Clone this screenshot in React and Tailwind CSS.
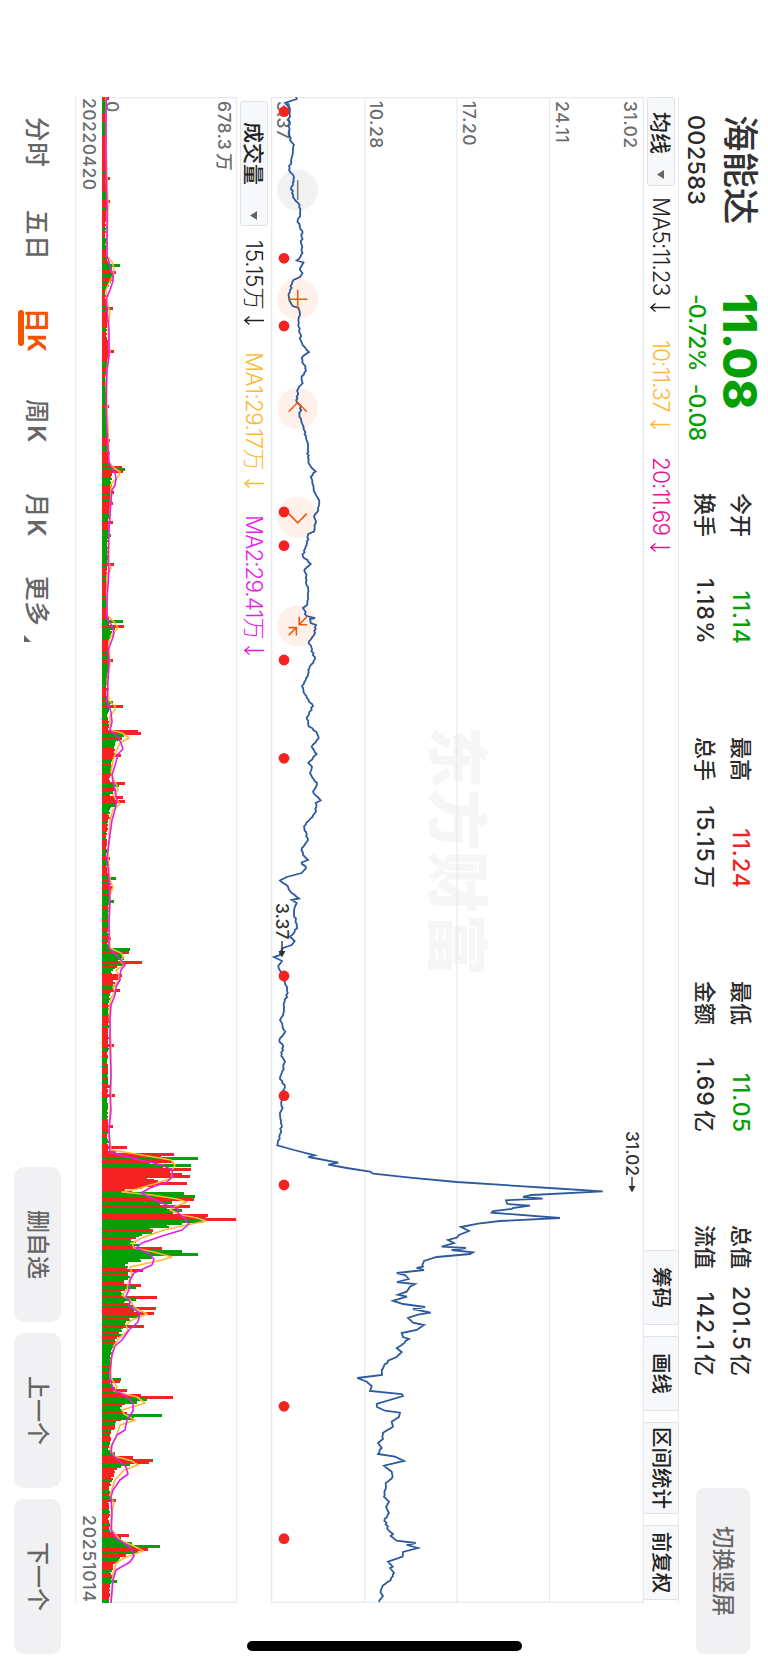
const RED = "#f52222";
const GREEN = "#06a006";

const MAIN_STATS = [
  [
    { label: "今开", value: "11.14", tone: "text-[#06a006]" },
    { label: "换手", value: "1.18%", tone: "text-[#2b2b2b]" },
  ],
  [
    { label: "最高", value: "11.24", tone: "text-[#f52222]" },
    { label: "总手", value: "15.15", unit: "万", tone: "text-[#2b2b2b]" },
  ],
  [
    { label: "最低", value: "11.05", tone: "text-[#06a006]" },
    { label: "金额", value: "1.69", unit: "亿", tone: "text-[#2b2b2b]" },
  ],
  [
    { label: "总值", value: "201.5", unit: "亿", tone: "text-[#2b2b2b]" },
    { label: "流值", value: "142.1", unit: "亿", tone: "text-[#2b2b2b]" },
  ],
];

// closing price, [x, height] pairs where height is measured up from y = 768
const PRICE = [
  [97, 296], [99, 296.7], [103, 285], [107, 289], [130, 289.5], [140, 290], [145, 294], [155, 292.5], [160, 291], [170, 289],
  [177, 294], [187, 291.5], [197, 293], [205, 299.5], [213, 300], [222, 297.5], [233, 302.5], [243, 301], [253, 302.5],
  [260.5, 296.7], [262.5, 303.5], [270, 300], [273, 302.5], [277, 300], [280, 293.5], [290, 290], [300, 289.3], [306, 292.7],
  [308, 298.5], [315, 300], [321.5, 298.5], [340, 300.7], [345, 302.7], [352, 309], [358, 301.7], [370.5, 306], [376.5, 301.7],
  [383, 302.7], [387, 299], [396.5, 296.7], [402, 296.7], [406.5, 301], [416.5, 299.3], [426.5, 303.5], [438, 306], [450, 307.7],
  [463, 308.5], [468, 311.7], [471.5, 315.7], [477, 310.7], [486.5, 313.5], [493, 315], [502.5, 319.3], [510, 318.3], [516.5, 314],
  [521.5, 316], [531.5, 314], [534, 308.3], [543, 307], [556, 302.7], [564, 310.7], [569, 305], [580, 306.7], [595, 308],
  [605, 307], [608, 303], [616, 306.7], [618, 315], [619, 310], [623, 310.7], [625, 316], [635, 314], [641.5, 309], [659, 315],
  [670, 308.3], [680, 305.7], [686, 302], [698, 307], [706, 313], [717.5, 306.7], [726.5, 309], [732, 316.7], [738, 318.7],
  [746.5, 311.7], [754, 316.7], [763, 308.3], [766.5, 312], [773, 310], [783, 317], [791.5, 313], [800.5, 320.7], [803, 315.7],
  [813, 315], [826.5, 304], [840, 308], [848, 302], [855, 303], [860, 308], [862.5, 301.7], [868, 306], [873, 301.7],
  [877, 286.7], [880.5, 280], [886.5, 288], [893, 291.7], [898.5, 299], [900, 291.7], [903, 296.7], [913, 294], [928, 297.3],
  [936.5, 290], [941, 294.7], [945, 291.7], [948, 283], [955, 280], [957, 274], [961, 282], [966, 278.3], [975, 283.3],
  [993, 287.7], [1003, 284], [1013, 283.3], [1020, 280], [1031.5, 285.3], [1040, 279.3], [1046.5, 283.3], [1056, 281.3],
  [1061.5, 285], [1073, 281.7], [1079, 280], [1087, 285], [1096.5, 281], [1108, 282.7], [1115, 280], [1125, 281.7],
  [1136.5, 279.3], [1145.3, 277.3], [1150, 294], [1155.3, 314.7], [1157, 308.3], [1162.7, 338.3], [1164.7, 328.3], [1168, 346.7],
  [1171.7, 370], [1173.7, 373.3], [1177.7, 410], [1182, 456.7], [1188, 549.3], [1191.3, 602.7], [1195, 531.7], [1197, 523],
  [1198.7, 542.7], [1200.3, 506], [1204, 507.3], [1205.7, 530], [1208, 512.7], [1209, 512], [1211, 493], [1212.7, 491.7],
  [1218, 560], [1221, 500], [1223.7, 478], [1227, 461], [1231, 469], [1235, 459], [1237.7, 456.7], [1240, 448], [1243, 454],
  [1246.7, 441.7], [1248, 466], [1250, 451.7], [1252.3, 473], [1254, 470], [1257, 436.7], [1261, 424], [1266.7, 423],
  [1268, 416.7], [1270, 424], [1273, 396.7], [1275, 405], [1279, 408.7], [1282, 397], [1284, 415], [1286.7, 410],
  [1291.7, 406.7], [1294.7, 398], [1296.7, 407], [1300.7, 393], [1304, 403], [1307, 425], [1309, 413], [1312.7, 430.7],
  [1314.7, 418], [1318, 408], [1322.7, 413], [1325, 424], [1330, 416.7], [1333, 401.7], [1337, 403], [1339, 409], [1345, 401.7],
  [1348, 396.7], [1352, 401.7], [1357, 396.7], [1360.7, 388], [1370, 381.7], [1375, 382], [1378, 357.3], [1381.7, 366.7],
  [1386, 371.7], [1391, 370], [1394, 401.7], [1396, 403], [1404, 376.7], [1407, 377], [1410.7, 385], [1412.7, 400], [1417, 399],
  [1421.7, 391.7], [1426.7, 393], [1432.7, 383], [1439, 383], [1443, 378], [1448, 381.7], [1454, 378], [1456.7, 395],
  [1461, 404], [1465.7, 384], [1471.7, 391.7], [1476.7, 392.7], [1483, 385.7], [1496.7, 384], [1501.7, 389], [1507, 386],
  [1513, 389], [1519, 384.7], [1530, 388], [1534, 393], [1536, 390.7], [1540.7, 396.7], [1543, 415.7], [1545, 406.7],
  [1548, 418], [1552, 403], [1556.7, 402.7], [1561.7, 388], [1566.7, 392.7], [1568, 390], [1572.7, 394], [1580, 390.7],
  [1585.7, 382.7], [1592.7, 380.7], [1596, 383], [1602, 379],
];

// bars that stand out: [x, height, colour]
const SPIKES = [
  [98, 7, 1], [178, 8, 1], [201, 8, 1], [265, 18, 0], [268, 10, 0], [272, 14, 1], [275, 12, 0], [308, 11, 1], [343, 7, 1], [351, 12, 1],
  [406, 7, 1], [440, 8, 1], [453, 8, 1], [467, 20, 1], [469, 23, 0], [471, 21, 1], [492, 12, 1], [503, 11, 1], [522, 11, 1],
  [535, 9, 0], [564, 12, 1], [621, 21, 0], [626, 22, 1], [628, 13, 0], [654, 8, 1], [660, 11, 1], [689, 7, 1], [702, 11, 0],
  [706.5, 21, 1], [731, 36, 1], [733, 39, 1], [735, 22, 0], [738, 20, 1], [755, 19, 1], [783, 23, 1], [785, 17, 0], [797, 21, 1],
  [801, 23, 1], [858, 8, 1], [878, 14, 0], [887, 11, 1], [901, 12, 0], [938, 9, 1], [949, 28, 0], [952, 27, 1], [955, 20, 0],
  [958, 22, 0], [962, 40, 1], [964, 23, 0], [975, 20, 1], [978, 18, 1], [990, 18, 1], [1045, 12, 1], [1086, 9, 1], [1095, 13, 1],
  [1126, 11, 1], [1147, 25, 1], [1154.5, 72, 1], [1158, 96, 0], [1161, 70, 1], [1165, 89, 0], [1169, 89, 1], [1172, 68, 1],
  [1174, 80, 1], [1176, 88, 1], [1183, 85, 1], [1180, 52, 1], [1193, 82, 0], [1196, 93, 0], [1199, 92, 1], [1202, 70, 0],
  [1206, 88, 1], [1210, 80, 0], [1215, 106, 1], [1217, 104, 1], [1219, 134, 1], [1221, 101, 0], [1223, 80, 0], [1225, 65, 0],
  [1230, 51, 1], [1248, 60, 1], [1251, 80, 0], [1254.5, 96, 0], [1257, 50, 0], [1270, 41, 1], [1285, 39, 1], [1287, 34, 0],
  [1297, 55, 1], [1299, 34, 0], [1308, 54, 1], [1313.5, 52, 1], [1316, 37, 0], [1326, 42, 1], [1379, 19, 0], [1381, 18, 1],
  [1390, 25, 1], [1395, 39, 1], [1397.5, 71, 1], [1399.5, 45, 0], [1402, 35, 0], [1415, 60, 0], [1418, 32, 0], [1453, 13, 0],
  [1457, 31, 1], [1460, 51, 1], [1462, 47, 1], [1464, 28, 0], [1500, 14, 1], [1535, 27, 1], [1543, 30, 0], [1546, 58, 0],
  [1549.5, 46, 1], [1552, 36, 0], [1555, 24, 1], [1581, 15, 0],
];

// ordinary turnover between the spikes
const FLOOR = [
  [97, 5], [125, 4], [200, 6], [215, 4], [255, 4], [262, 7], [278, 11], [283, 8], [290, 3], [310, 6], [330, 5], [355, 7], [375, 4],
  [430, 5], [460, 7], [466, 10], [476, 10], [490, 10], [515, 8], [545, 6], [600, 4], [620, 7], [632, 10], [642, 6], [665, 7],
  [690, 4], [705, 9], [712, 6], [728, 7], [734, 22], [742, 14], [758, 13], [766, 9], [782, 8], [788, 14], [794, 9], [803, 14],
  [810, 8], [830, 5], [870, 5], [885, 9], [900, 7], [945, 6], [952, 20], [966, 15], [972, 10], [982, 14], [990, 10], [1000, 7],
  [1060, 6], [1140, 6], [1151, 6], [1153, 60], [1186, 52], [1189, 20], [1191, 30], [1193, 72], [1206, 60], [1212, 78], [1220, 90],
  [1228, 57], [1236, 38], [1243, 32], [1250, 50], [1257, 46], [1263, 28], [1276, 29], [1283, 23], [1295, 21], [1304, 29],
  [1313, 38], [1320, 25], [1332, 20], [1345, 11], [1360, 9], [1378, 8], [1388, 12], [1394, 22], [1400, 35], [1406, 20], [1414, 25],
  [1422, 14], [1435, 9], [1448, 6], [1456, 14], [1462, 28], [1470, 13], [1485, 8], [1515, 7], [1530, 9], [1540, 22], [1550, 36],
  [1558, 16], [1568, 10], [1603, 7],
];

const MA1 = [
  [97, 4], [140, 4], [178, 5], [205, 6], [256, 5], [262, 10], [268, 12], [275, 11], [283, 7], [290, 4], [306, 6], [312, 8], [330, 6],
  [352, 8], [360, 6], [380, 4], [430, 6], [462, 7], [468, 12], [472, 18], [476, 17], [484, 9], [495, 9], [530, 7], [564, 7], [568, 9],
  [575, 5], [615, 5], [622, 12], [628, 16], [634, 10], [641, 7], [665, 8], [680, 5], [701, 7], [706, 13], [710, 13], [716, 8],
  [730, 8], [733, 20], [738, 27], [743, 18], [750, 15], [760, 11], [772, 9], [780, 12], [786, 15], [790, 16], [795, 11], [800, 15],
  [804, 18], [810, 11], [820, 8], [857, 6], [880, 8], [887, 11], [895, 8], [920, 7], [948, 8], [953, 19], [957, 22], [961, 18],
  [965, 23], [970, 14], [975, 17], [980, 17], [987, 11], [992, 13], [998, 9], [1010, 7], [1045, 9], [1095, 9], [1130, 7], [1150, 9],
  [1155, 40], [1160, 69], [1165, 73], [1170, 70], [1178, 70], [1184, 52], [1189, 35], [1192, 20], [1195, 50], [1199, 75],
  [1202, 85], [1207, 72], [1210, 68], [1215, 80], [1218, 95], [1221, 104], [1225, 85], [1230, 62], [1237, 42], [1243, 30],
  [1248, 32], [1252, 52], [1257, 70], [1260, 60], [1267, 28], [1275, 30], [1283, 26], [1290, 25], [1295, 20], [1300, 28],
  [1308, 33], [1314, 45], [1320, 30], [1325, 24], [1331, 26], [1338, 17], [1346, 12], [1360, 9], [1378, 9], [1387, 15], [1391, 12],
  [1397, 35], [1403, 43], [1410, 20], [1414, 22], [1420, 33], [1425, 18], [1437, 14], [1448, 8], [1456, 12], [1461, 30], [1465, 36],
  [1470, 22], [1480, 13], [1495, 8], [1503, 12], [1515, 9], [1530, 10], [1540, 18], [1546, 32], [1551, 41], [1558, 22], [1563, 14],
  [1575, 11], [1603, 9],
];

const MA2 = [
  [97, 5], [103, 4], [178, 4], [205, 5], [256, 5], [262, 7], [270, 9], [276, 11], [281, 11], [290, 8], [300, 4], [310, 5], [330, 7],
  [357, 7], [370, 5], [410, 4], [450, 6], [462, 7], [467, 9], [472, 13], [479, 14], [485, 13], [490, 10], [500, 9], [530, 7],
  [560, 6], [570, 7], [600, 5], [618, 5], [626, 10], [633, 12], [640, 10], [650, 6], [660, 7], [680, 6], [701, 5], [712, 9],
  [722, 10], [730, 8], [737, 16], [743, 19], [749, 21], [754, 16], [762, 14], [775, 10], [782, 11], [790, 13], [800, 15], [810, 13],
  [820, 10], [835, 8], [857, 5], [880, 7], [900, 8], [925, 7], [948, 7], [955, 14], [961, 20], [965, 23], [970, 19], [975, 18],
  [980, 18], [987, 14], [995, 13], [1005, 9], [1020, 8], [1045, 8], [1075, 9], [1095, 8], [1110, 9], [1130, 7], [1152, 8],
  [1158, 30], [1165, 60], [1170, 70], [1176, 71], [1182, 65], [1188, 48], [1193, 39], [1200, 53], [1205, 65], [1209, 76],
  [1213, 76], [1218, 82], [1224, 87], [1230, 80], [1236, 60], [1243, 40], [1248, 34], [1253, 46], [1259, 52], [1265, 50],
  [1273, 32], [1280, 28], [1288, 28], [1296, 24], [1302, 28], [1306, 27], [1313, 38], [1322, 36], [1330, 27], [1340, 20],
  [1346, 13], [1355, 10], [1370, 8], [1380, 8], [1390, 12], [1396, 24], [1403, 31], [1411, 31], [1420, 25], [1430, 23], [1435, 15],
  [1445, 10], [1453, 9], [1460, 16], [1467, 24], [1474, 26], [1480, 18], [1490, 11], [1497, 9], [1515, 10], [1530, 9], [1538, 14],
  [1547, 28], [1556, 32], [1562, 28], [1570, 14], [1580, 11], [1603, 9],
];

const EVENT_DOTS = [111.7, 258.3, 326, 512, 545.7, 660, 758.3, 976, 1095.7, 1185, 1406.3, 1538.7];

function seeded(seed) {
  let s = seed;
  return () => {
    s = (s * 16807) % 2147483647;
    return s / 2147483647;
  };
}

function lerpAt(knots, x) {
  for (let i = 1; i < knots.length; i++) {
    if (x <= knots[i][0]) {
      const [x0, y0] = knots[i - 1];
      const [x1, y1] = knots[i];
      return y0 + ((y1 - y0) * (x - x0)) / (x1 - x0);
    }
  }
  return knots[knots.length - 1][1];
}

function pricePoints() {
  const rnd = seeded(77);
  const out = [];
  PRICE.forEach(([x, h], i) => {
    out.push(`${x},${768 - h}`);
    const next = PRICE[i + 1];
    if (!next) return;
    const steps = Math.floor((next[0] - x) / 1.79);
    if (steps < 3 || Math.abs(next[1] - h) > 12) return;
    for (let k = 1; k < steps; k++) {
      const t = k / steps;
      out.push(`${(x + (next[0] - x) * t).toFixed(1)},${(768 - h - (next[1] - h) * t + (rnd() - 0.5) * 2).toFixed(1)}`);
    }
  });
  return out.join(" ");
}

function volumePaths() {
  const rnd = seeded(4242);
  const paths = ["", ""];
  let up = 1;
  for (let i = 0; i < 843; i++) {
    const x = 97 + i * 1.787;
    if (rnd() < 0.5) up = rnd() < 0.46 ? 1 : 0;
    let c = up;
    if (x > 1152 && x < 1191) c = 1;
    if (x > 1191 && x < 1265) c = rnd() < 0.16 ? 1 : 0;
    if (x > 1265 && x < 1450) c = rnd() < 0.36 ? 1 : 0;
    const h = lerpAt(FLOOR, x) * (0.82 + rnd() * 0.26);
    paths[c] += `M${x.toFixed(1)} 666v${-h.toFixed(1)}h2v${h.toFixed(1)}z`;
  }
  return paths;
}

const toPoints = (knots) => knots.map(([x, h]) => `${x},${666 - h}`).join(" ");

function DownArrow() {
  return (
    <svg className="h-5 w-[9px] shrink-0" viewBox="0 0 9 20" fill="none" stroke="currentColor" strokeWidth="1.3">
      <path d="M4.5 0V19M.6 14.5 4.5 19.2 8.4 14.5" />
    </svg>
  );
}

function Caret() {
  return (
    <svg className="h-[7px] w-[9px]" viewBox="0 0 9 7" fill="#666">
      <path d="M0 0h9L4.5 7z" />
    </svg>
  );
}

function Indicator({ text, className }) {
  return (
    <div className={`flex items-center justify-between whitespace-nowrap text-[22.5px] font-light leading-none ${className}`}>
      <span>{text}</span>
      <DownArrow />
    </div>
  );
}

function ToolButton({ children, className }) {
  return (
    <div
      className={`flex h-[36px] items-center justify-center rounded-[3px] border border-[#dfe2e9] bg-[#f7f8fa] pt-px text-[20.5px] font-medium leading-none text-[#222] ${className}`}
    >
      {children}
    </div>
  );
}

function Header() {
  return (
    <header className="flex h-[89px] pl-[115px] pr-[11px]">
      <div className="w-[178px] text-[#333]">
        <div className="flex h-[56px] items-center text-[36.5px] font-medium leading-none">海能达</div>
        <div className="flex h-[31px] items-center text-[23.5px] font-medium leading-none tracking-[0.2px] text-[#2b2b2b]">002583</div>
      </div>
      <div className="w-[200px] text-[#06a006]">
        <div className="flex h-[56px] items-center text-[46px] font-extrabold leading-none tracking-[-0.3px]">11.08</div>
        <div className="flex h-[31px] items-center gap-[13px] pl-px text-[23px] font-medium leading-none tracking-[-0.8px]">
          <span>-0.72%</span>
          <span>-0.08</span>
        </div>
      </div>
      <div className="flex gap-[93px] pt-[9px]">
        {MAIN_STATS.map((column) => (
          <div key={column[0].label} className="w-[151px]">
            {column.map((stat) => (
              <div key={stat.label} className="flex h-[36px] items-center justify-between text-[22px] font-medium leading-none">
                <span className="text-[#2b2b2b]">{stat.label}</span>
                <span className={`-mr-px text-[23px] tracking-[1.1px] ${stat.tone}`}>
                  {stat.value}
                  {stat.unit ? <span className="ml-[3px] text-[22px]">{stat.unit}</span> : null}
                </span>
              </div>
            ))}
          </div>
        ))}
      </div>
      <button className="ml-auto mt-[18px] flex h-[54px] w-[166px] items-center justify-center rounded-lg bg-[#f1f1f3] text-[22.5px] font-medium leading-none text-[#666]">
        切换竖屏
      </button>
    </header>
  );
}

function PriceToolbar() {
  return (
    <div className="flex h-[35px] items-center border-t border-[#ececee]">
      <div className="flex h-[28px] w-[89px] items-center justify-between rounded-[3px] border border-[#dfe2e9] bg-[#f7f8fa] pl-[14px] pr-[6px] text-[21px] font-medium leading-none text-[#222]">
        <span className="pt-px">均线</span>
        <Caret />
      </div>
      <Indicator text="MA5:11.23" className="ml-[11px] w-[115px] pt-px tracking-[-0.9px] text-[#222]" />
      <Indicator text="10:11.37" className="ml-[28px] w-[89px] pt-px tracking-[-0.9px] text-[#ffb836]" />
      <Indicator text="20:11.69" className="ml-[28px] w-[95px] pt-px tracking-[-0.8px] text-[#e6138f]" />
      <div className="ml-auto mr-[3px] flex gap-[11px]">
        <ToolButton className="w-[75px]">筹码</ToolButton>
        <ToolButton className="w-[75px]">画线</ToolButton>
        <ToolButton className="w-[92px]">区间统计</ToolButton>
        <ToolButton className="w-[75px]">前复权</ToolButton>
      </div>
    </div>
  );
}

function PriceChart() {
  return (
    <svg className="block h-[373px] w-[1506px]" viewBox="97 124 1506 373">
      <text x="726" y="334" textLength="250" fontSize="62" fontWeight="900" fill="#f6f6f7">
        东方财富
      </text>
      <g fill="none" stroke="#e6e9ee" strokeWidth="1.2">
        <path d="M97.6 124V497M1602.4 124V497M97 124.6H1603M97 496.4H1603" />
        <path d="M97 218.5H1603M97 311H1603M97 403.2H1603" />
      </g>
      <g fontSize="17.5" fontWeight="500" fill="#6b6b6b" letterSpacing="0.5">
        <text x="101" y="144.5">31.02</text>
        <text x="101" y="212.5">24.11</text>
        <text x="101" y="305.5">17.20</text>
        <text x="101" y="398">10.28</text>
        <text x="101" y="491">3.37</text>
      </g>

      <circle cx="190" cy="470.3" r="20.5" fill="#f2f2f2" />
      <g fill="#fff1ea">
        <circle cx="299.3" cy="470.3" r="20.5" />
        <circle cx="408.3" cy="470.3" r="20.5" />
        <circle cx="517.3" cy="470.3" r="20.5" />
        <circle cx="626" cy="470.3" r="20.5" />
      </g>
      <polyline points={pricePoints()} fill="none" stroke="#2d5a9e" strokeWidth="1.8" />
      <g fill="#333" fontSize="17.5" fontWeight="500">
        <text x="903" y="492">3.37</text>
        <path d="M941 485.3h10v-2.8l6.5 3.5-6.5 3.5v-2.8h-10z" />
        <text x="1131" y="142.5">31.02</text>
        <path d="M1177 135.3h9v-2.8l6.5 3.5-6.5 3.5v-2.8h-9z" />
      </g>
      {EVENT_DOTS.map((x) => (
        <circle key={x} cx={x} cy="484" r="5.4" fill={RED} />
      ))}
      <path d="M180.3 470.3h19.6" stroke="#777" strokeWidth="1.5" />
      <g fill="none" stroke="#ee5a12" strokeWidth="1.6">
        <path d="M289.7 470.3h19.2M299.3 460.7v19.2" />
        <path d="M411.7 461.3 402.3 470.3 411.7 479.3" />
        <path d="M513.6 461.3 522.8 470.3 513.6 479.3" />
        <path d="M616.7 461.3 624.7 468.8M616.7 468.8h8v-8M635.3 479.3 627.6 471.6M635.5 471.6h-7.9v7.9" />
      </g>
    </svg>
  );
}

function VolumeToolbar() {
  return (
    <div className="flex h-[34px] items-center pl-1">
      <div className="flex h-[28px] w-[125px] items-center justify-between rounded-[3px] border border-[#dfe2e9] bg-[#f7f8fa] pl-[20px] pr-[5px] text-[21px] font-medium leading-none text-[#222]">
        成交量
        <Caret />
      </div>
      <Indicator text="15.15万" className="ml-[14px] w-[85px] tracking-[-0.2px] text-[#222]" />
      <Indicator text="MA1:29.17万" className="ml-[27px] w-[136px] tracking-[-0.7px] text-[#ffb836]" />
      <Indicator text="MA2:29.41万" className="ml-[27px] w-[140px] tracking-[-1px] text-[#e61ee6]" />
    </div>
  );
}

function VolumeChart() {
  const [green, red] = volumePaths();
  return (
    <svg className="block h-[162px] w-[1506px]" viewBox="97 531 1506 162">
      <path d="M97.6 531V666M1602.4 531V666M97 531.6H1603M97 692.3H1603" fill="none" stroke="#e6e9ee" strokeWidth="1.2" />
      <g shapeRendering="crispEdges">
        <path d={green} fill={GREEN} />
        <path d={red} fill={RED} />
        {SPIKES.map(([x, h, up]) => (
          <rect key={x} x={x - 1.5} y={666 - h} width="3" height={h} fill={up ? RED : GREEN} />
        ))}
      </g>
      <g fontSize="17.5" fontWeight="500" fill="#6b6b6b">
        <text x="101" y="550" letterSpacing="0.4">
          678.3<tspan dx="3">万</tspan>
        </text>
        <text x="101" y="662">0</text>
        <text x="98" y="685" textLength="92">20220420</text>
        <text x="1515" y="685" textLength="87">20251014</text>
      </g>
      <g fill="none" strokeLinejoin="round" strokeWidth="1.6">
        <polyline points={toPoints(MA1)} stroke="#ffb836" />
        <polyline points={toPoints(MA2)} stroke="#e61ee6" />
      </g>
    </svg>
  );
}

function Footer() {
  return (
    <footer className="flex h-[75px] items-center pl-[117px] pr-[11px] text-[24.5px] font-medium leading-none text-[#666]">
      <nav className="flex pt-0.5 tracking-[0.8px]">
        <span className="w-[93px]">分时</span>
        <span className="w-[98px]">五日</span>
        <span className="relative w-[91px] font-bold text-[#f25400]">
          日<span className="ml-px">K</span>
          <span className="absolute -bottom-[6px] left-[2px] h-[6px] w-[36px] rounded-full bg-[#f25400]" />
        </span>
        <span className="w-[94px]">
          周<span className="ml-px font-semibold">K</span>
        </span>
        <span className="w-[83px]">
          月<span className="ml-px font-semibold">K</span>
        </span>
        <span className="flex items-end gap-2">
          更多
          <svg className="h-[7px] w-[7px]" viewBox="0 0 7 7" fill="#666">
            <path d="M7 0v7H0z" />
          </svg>
        </span>
      </nav>
      <div className="ml-auto flex gap-[11px] text-[23px]">
        <button className="h-[47px] w-[155px] rounded-[10px] bg-[#f1f1f3]">删自选</button>
        <button className="h-[47px] w-[155px] rounded-[10px] bg-[#f1f1f3]">上一个</button>
        <button className="h-[47px] w-[155px] rounded-[10px] bg-[#f1f1f3]">下一个</button>
      </div>
    </footer>
  );
}

export default function App() {
  return (
    <div className="h-[1665px] w-[768px] overflow-hidden bg-white">
      <div className="relative h-[768px] w-[1665px] origin-top-left translate-x-[768px] rotate-90 font-['Inter','Noto_Sans_CJK_SC',sans-serif]">
        <Header />
        <main className="ml-[97px] w-[1506px]">
          <PriceToolbar />
          <PriceChart />
          <VolumeToolbar />
          <VolumeChart />
        </main>
        <Footer />
        <div className="absolute left-[1641px] top-[246px] h-[275px] w-[10px] rounded-full bg-black" />
      </div>
    </div>
  );
}
